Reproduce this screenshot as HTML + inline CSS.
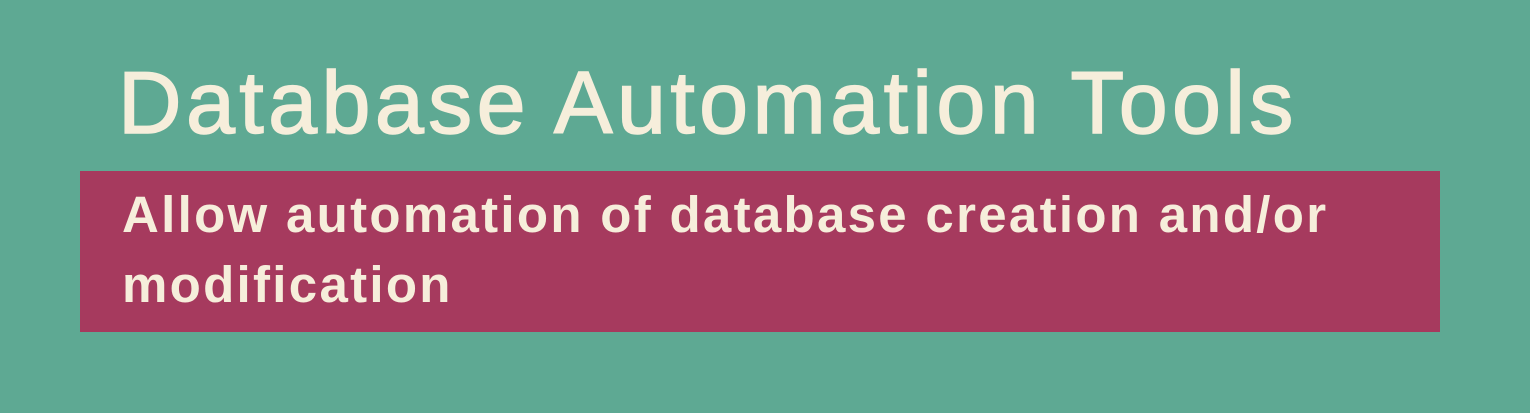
<!DOCTYPE html>
<html><head><style>
html,body{margin:0;padding:0}
body{width:1530px;height:413px;background:#5ea993;position:relative;overflow:hidden;font-family:"Liberation Sans",sans-serif;color:#f6eedb}
.t{position:absolute;left:118px;top:53px;font-size:88px;line-height:100px;white-space:nowrap;letter-spacing:4.4px;-webkit-text-stroke:1.5px #f6eedb}
.b{position:absolute;left:80px;top:171px;width:1360px;height:161px;background:#a63a5e}
.s{position:absolute;left:122px;top:180px;font-size:51px;line-height:70px;font-weight:bold;white-space:nowrap;letter-spacing:2.3px}
</style></head><body>
<div class="t">Database Automation Tools</div>
<div class="b"></div>
<div class="s">Allow automation of database creation and/or<br>modification</div>
</body></html>
